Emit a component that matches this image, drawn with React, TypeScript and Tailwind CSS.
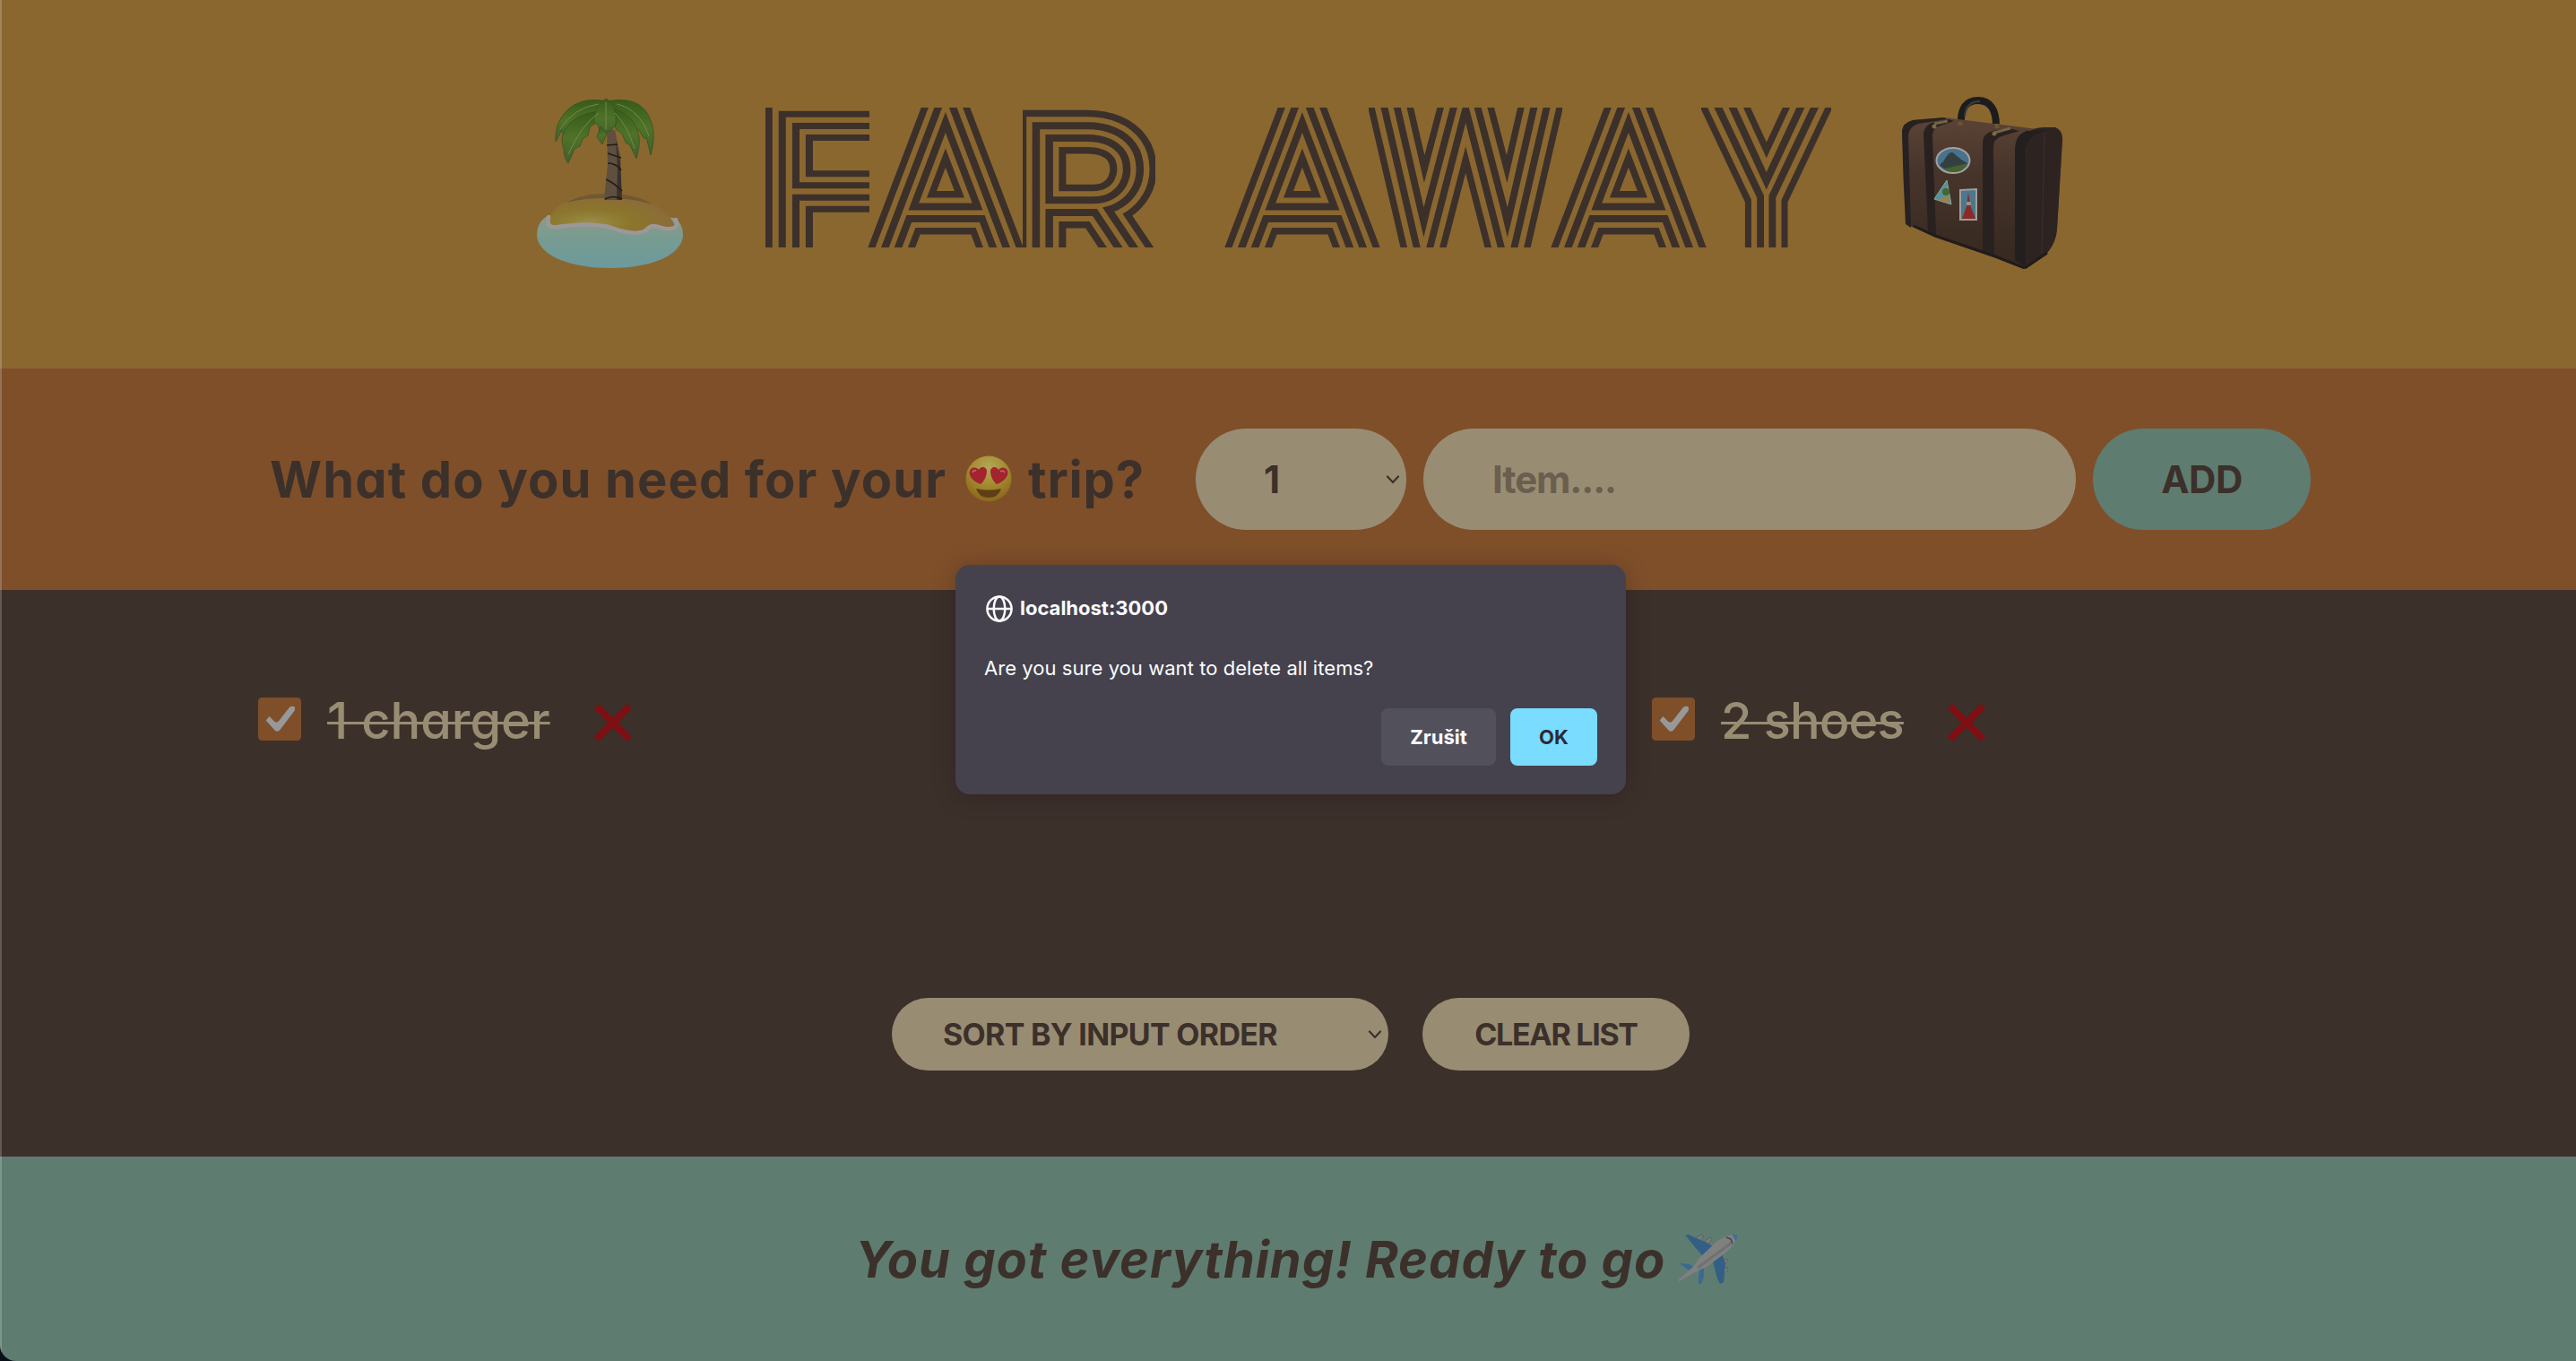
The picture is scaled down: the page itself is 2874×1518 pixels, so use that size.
import React from "react";

const QUICK = "font-['Inter','Liberation_Sans',sans-serif] [font-feature-settings:'cv11']";

type LetterProps = { char: string; box: string; glyph: string };

/* One inline-striped capital: the outer, middle and inner contours are stacked strokes of the same glyph. */
function Letter({ char, box, glyph }: LetterProps) {
  return (
    <span className={`relative block h-[156px] shrink-0 overflow-hidden ${box}`}>
      <span
        data-char={char}
        className={`absolute isolate block leading-none font-thin text-[#8a672f] [paint-order:stroke_fill] before:absolute before:inset-0 before:z-[-2] before:text-[#3c302b] before:content-[attr(data-char)] after:absolute after:inset-0 after:z-[-1] after:content-[attr(data-char)] ${glyph}`}
      >
        {char}
      </span>
    </span>
  );
}

const STROKES_F =
  "[-webkit-text-stroke:14px_#3c302b] before:[-webkit-text-stroke:40px_#3c302b] after:[-webkit-text-stroke:26px_#8a672f]";
const STROKES =
  "[-webkit-text-stroke:16px_#3c302b] before:[-webkit-text-stroke:43px_#3c302b] after:[-webkit-text-stroke:28px_#8a672f]";
const STROKES_W =
  "[-webkit-text-stroke:18px_#3c302b] before:[-webkit-text-stroke:50px_#3c302b] after:[-webkit-text-stroke:33px_#8a672f]";
const STROKES_Y =
  "[-webkit-text-stroke:20px_#3c302b] before:[-webkit-text-stroke:54px_#3c302b] after:[-webkit-text-stroke:36px_#8a672f]";

const A_GLYPH = "left-1/2 top-[-33px] -translate-x-1/2 scale-x-[1.02] font-['Inter',sans-serif] text-[247px]";

function Wordmark() {
  return (
    <h1 className="ml-[90px] mt-[10px] flex font-['Roboto',sans-serif]">
      <Letter char="F" box="w-[116px]" glyph={`left-[-4px] top-[-20px] origin-left scale-x-[1.15] text-[238px] ${STROKES_F}`} />
      <Letter char="A" box="-ml-[3px] w-[175px]" glyph={`${A_GLYPH} ${STROKES}`} />
      <Letter char="R" box="-ml-[1px] w-[148px]" glyph={`left-[-3px] top-[-4px] origin-left scale-x-[1.07] text-[218px] ${STROKES}`} />
      <Letter char="A" box="ml-[77px] w-[174px]" glyph={`${A_GLYPH} ${STROKES}`} />
      <Letter char="W" box="-ml-[13px] w-[216px]" glyph={`left-1/2 top-[-57px] -translate-x-1/2 scale-x-[0.86] text-[253px] ${STROKES_W}`} />
      <Letter char="A" box="-ml-[13px] w-[174px]" glyph={`${A_GLYPH} ${STROKES}`} />
      <Letter char="Y" box="-ml-[6px] w-[145px]" glyph={`left-1/2 top-[-55px] -translate-x-1/2 scale-x-[0.78] text-[267px] ${STROKES_Y}`} />
    </h1>
  );
}

function Island() {
  return (
    <svg viewBox="0 0 166 190" className="h-[190px] w-[166px] shrink-0">
      <defs>
        <linearGradient id="sea" x1="0" y1="0" x2="0" y2="1">
          <stop offset="0" stopColor="#8f9a85" />
          <stop offset=".45" stopColor="#779b91" />
          <stop offset="1" stopColor="#6c9a9c" />
        </linearGradient>
        <radialGradient id="sand" cx=".32" cy=".75" r=".75">
          <stop offset="0" stopColor="#998c4a" />
          <stop offset=".45" stopColor="#8b762b" />
          <stop offset="1" stopColor="#8b693b" />
        </radialGradient>
        <linearGradient id="leaf" x1="0" y1="0" x2="0" y2="1">
          <stop offset="0" stopColor="#365c1b" />
          <stop offset=".5" stopColor="#4f7228" />
          <stop offset="1" stopColor="#43602f" />
        </linearGradient>
      </defs>
      <path d="M16 130C5 133 1 143 1 153c2 23 39 36 82 36s79-13 81-36c0-12-5-17-10-20Z" fill="url(#sea)" />
      <path d="M16 130c10-16 34-24 63-24 40 1 68 16 77 37-7 6-18-2-25 0-8 2-4 6-15 6-14 0-38-9-55-9-16-1-28 3-42 1-4-2-5-6-3-11Z" fill="url(#sand)" />
      <path d="M14 132c-2 10 1 12 10 11 20-3 40-4 57 0 12 4 26 9 37 6 8-2 6-7 13-7 8 1 16 6 23 2 4-2 3-5 2-9" fill="none" stroke="#9b9899" strokeWidth="4.500" strokeLinecap="round" />
      <path d="M34 116c12-7 26-10 46-10s38 4 50 12c-18-5-30-7-50-7s-30 1-46 5Z" fill="#5a4a2c" opacity=".55" />
      <path d="M79 35h9l6 28 2 50H76l4-40Z" fill="#5e4f3f" />
      <path d="M89 46l5 24 2 43h-6l1-36Z" fill="#3b302a" />
      <path d="M79 52l12-1M80 61l15 5M80 72q10 0 15 8M78 90q9 4 18 13M77 112q9-5 19 0" fill="none" stroke="#211c19" strokeWidth="1.6" />
      <g fill="url(#leaf)" stroke="#31501f" strokeWidth=".7">
        <path d="M78 3C55-2 38 6 29 20c-7 10-7 19-7 28l7-13 2 8 9-15 4 5 10-12 4 3 26-13Z" />
        <path d="M80 3c24-5 40 3 46 17 7 13 6 28 2 43l-5-20-2 2-7-11-4 1-8-12-5-2-18-10Z" />
        <path d="M72 14C53 16 37 23 31 38c-4 8-1 14 0 18 0 7 2 12 5 16l7-16 6-3 3-8 6-4 2-9 5-4 8-10Z" />
        <path d="M86 11c15 5 25 14 28 27 3 11 0 21-2 29l-7-15-5-3-4-10-6-4-6-14Z" />
        <path d="M78 0C69 6 64 16 65 27l4 2 4 14 6-6 6-3 4-5c1-14-2-24-11-29Z" />
        <path d="M72 31l-4 12 6 8 5-12Z" />
      </g>
      <path d="M78 4v30M70 16Q50 30 36 62M88 16q14 14 22 40M70 6Q42 10 27 34M90 6q26 6 36 36" fill="none" stroke="#718b48" strokeWidth="1" />
    </svg>
  );
}

function Suitcase() {
  return (
    <svg viewBox="0 0 182 192" className="h-[192px] w-[182px] shrink-0">
      <defs>
        <linearGradient id="hide" x1="0" y1="0" x2="0" y2="1">
          <stop offset="0" stopColor="#5b4336" />
          <stop offset=".35" stopColor="#47352b" />
          <stop offset="1" stopColor="#35281f" />
        </linearGradient>
      </defs>
      <path d="M67 31C66 12 73 4 86 4s20 10 20 28" fill="none" stroke="#1d1c1d" strokeWidth="8" />
      <path d="M71 22C72 9 79 5 88 5" fill="none" stroke="#3c3b3b" strokeWidth="2" />
      <path d="M1 38q1-9 12-12l35-3 96 12 32 4q5 2 4 10l-6 98q-1 16-11 27l-25 17-33-13-67-23-28-11q-4-10-5-22Z" fill="url(#hide)" />
      <path d="M140 42q6-8 20-8h12q8 3 8 13l-6 100q-1 15-11 27l-24 17q-4-30-2-60Z" fill="#2d2422" />
      <path d="M160 40l-3 134" stroke="#3d302b" strokeWidth="1" />
      <path d="M1 38q1-9 12-12l35-3 3 2-32 5q-9 3-11 12l3 104-6-4Q2 90 1 38Z" fill="#272122" />
      <path d="M25 40q2-8 9-11l19-4 6 2-18 6q-6 3-6 11l4 110-9-4Z" fill="#29211f" />
      <path d="M91 50q1-9 11-12l18-3 12 3-20 6q-9 3-9 12l1 122-13-5Z" fill="#29211f" />
      <path d="M127 60q0-18 13-22l24-1-14 5q-10 5-11 19v129l-12-8Z" fill="#241f1f" />
      <path d="M37 30l15-3M104 40l18-5" stroke="#726345" strokeWidth="3" />
      <circle cx="37" cy="33" r="2.500" fill="#7a6a43" />
      <circle cx="104" cy="41" r="2.500" fill="#7a6a43" />
      <path d="M66 28v4M107 30v5" stroke="#695733" strokeWidth="5" />
      <path d="M138 191l25-17M14 144l24 11 67 23 33 13" fill="none" stroke="#211b1a" strokeWidth="3" />
      <ellipse cx="58" cy="71" rx="18.500" ry="14" fill="#49728f" stroke="#a1a19d" strokeWidth="2" />
      <path d="M43 76q5-4 8-10 5-7 9-2 6 6 14 10-4 9-16 9-10-1-15-7Z" fill="#33403f" />
      <path d="M48 80q10-2 26-6-3 10-16 10-6 0-10-4Z" fill="#48602f" />
      <path d="M51 93l5 27-19-6Z" fill="#57919d" stroke="#90a19b" />
      <circle cx="50" cy="106" r="4" fill="#3f692d" />
      <path d="M42 115l10-5 3 8Z" fill="#a18144" />
      <path d="M66 104l18-1v34H66Z" fill="#4b788c" stroke="#9f9d98" strokeWidth="2" />
      <path d="M75 107l3 16 5 13H68l5-14Z" fill="#8a2a28" />
      <path d="M73 117h5v4h-5Z" fill="#98918c" />
    </svg>
  );
}

function HeartEyes() {
  return (
    <svg viewBox="0 0 52 52" className="-mt-[2px] h-[52px] w-[52px] shrink-0">
      <defs>
        <radialGradient id="face" cx=".5" cy=".25" r=".75">
          <stop offset="0" stopColor="#b3a65a" />
          <stop offset=".5" stopColor="#a48d30" />
          <stop offset="1" stopColor="#8b651d" />
        </radialGradient>
      </defs>
      <circle cx="26" cy="26" r="25.5" fill="url(#face)" />
      <path d="M17 32C8 29 3 22 5 17c2-5 8-4 10-1 2-4 8-4 9 1 0 6-3 12-7 15Z" fill="#a3242e" />
      <path d="M35 32c9-3 14-10 12-15-2-5-8-4-10-1-2-4-8-4-9 1 0 6 3 12 7 15Z" fill="#a3242e" />
      <path d="M8 19q1-3 4-2M39 18q3-2 5 1" stroke="#bb6b70" strokeWidth="1.6" fill="none" />
      <path d="M12 37q14 3 28 0-3 10-14 10T12 37Z" fill="#5d3f17" />
    </svg>
  );
}

function Plane() {
  return (
    <svg viewBox="0 0 66 56" className="h-[56px] w-[66px] shrink-0">
      <g fill="#777b7b" stroke="#4d5556" strokeWidth=".6">
        <path d="M20 5l6-4 3 2-5 6ZM30 8l6-4 2 2-4 6ZM49 32l6-4 1 3-5 5ZM49 41l6-4 1 4-6 4Z" />
      </g>
      <path d="M11 5l-3-3 4-1 20 9 13 8-13 12-13-15Z" fill="#335f86" />
      <path d="M39 31l10-9 4 11-2 21-4 2-3-6Z" fill="#335f86" />
      <path d="M1 33l12 1 7 4-5 5-8-6Z" fill="#3a6a91" />
      <path d="M24 40l5-2v10l-3 8h-3v-9Z" fill="#3a6a91" />
      <path d="M64 1q3 3-1 9-3 6-12 13L32 37l-9 4L1 53l-1-1 17-15 7-10L43 9Q56 0 64 1Z" fill="#808080" />
      <path d="M60 1q5-1 6 1 1 3-2 6-1-4-4-7Z" fill="#3a709b" />
      <path d="M22 38 60 10" stroke="#666868" strokeWidth="3" opacity=".6" />
      <path d="M54 4l5 2 2 5" fill="none" stroke="#3e4347" strokeWidth="1.4" />
    </svg>
  );
}

function Chevron() {
  return (
    <svg viewBox="0 0 16 10" className="h-[10px] w-[16px]" fill="none" stroke="#3c302b" strokeWidth="2.200" strokeLinecap="round">
      <path d="M2 1.500 8 8l6-6.500" />
    </svg>
  );
}

function Item({ label, className }: { label: string; className: string }) {
  return (
    <li className="flex items-start">
      <svg viewBox="0 0 48 48" className="mt-[1px] h-12 w-12">
        <rect width="48" height="48" rx="4.500" fill="#7f4f2a" />
        <path d="M8.700 25.500 12.500 21l6 6q2.500 1.500 4.500-.7L35 10.800q2-1.300 5.500-.8 1 2.500.3 4.500L24 36.500q-3 2.500-5.500 0z" fill="#989899" />
      </svg>
      <span className={`ml-[29px] mt-[2px] block whitespace-nowrap text-[56px] font-medium leading-[50px] text-[#988d73] line-through decoration-[3px] ${className}`}>
        {label}
      </span>
      <svg viewBox="0 0 44 44" className="ml-[48px] mt-[7px] h-[44px] w-[44px]">
        <path d="M1 6.500 6.500 1 22 16.500 37.500 1 43 6.500 28 22l15 15.500-5.500 5.500L22 27.500 6.500 43 1 37.500 16 22Z" fill="#7e0f13" />
      </svg>
    </li>
  );
}

function Dialog() {
  return (
    <div
      role="dialog"
      className="absolute left-[1066px] top-[630px] flex h-[256px] w-[748px] flex-col rounded-2xl bg-[#45424d] px-8 pb-8 pt-[30px] font-['Inter',sans-serif] text-[22px] text-[#fbfbfe] shadow-[0_2px_28px_rgba(0,0,0,0.22)] [font-feature-settings:normal]"
    >
      <div className="flex h-9 items-center gap-2 pl-[2px]">
        <svg viewBox="0 0 30 30" className="mt-[2px] h-[30px] w-[30px]" fill="none" stroke="#fbfbfe" strokeWidth="2.500">
          <circle cx="15" cy="15" r="13.600" />
          <ellipse cx="15" cy="15" rx="6.300" ry="13.600" />
          <path d="M1.500 15h27" />
        </svg>
        <span className="font-bold leading-9">localhost:3000</span>
      </div>
      <p className="mt-[33px] leading-8 tracking-[0.050px]">Are you sure you want to delete all items?</p>
      <div className="mt-auto flex justify-end gap-4 font-bold">
        <button className="h-16 w-[128px] rounded-lg bg-[#52505b]">Zrušit</button>
        <button className="h-16 w-[97px] rounded-lg bg-[#7adcff] text-[#2b2a33]">OK</button>
      </div>
    </div>
  );
}

export default function App() {
  return (
    <div className="h-[1518px] w-[2874px] overflow-hidden bg-[#0a1018]">
      <div className={`relative flex h-full flex-col overflow-hidden rounded-bl-[18px] text-[#3c302b] ${QUICK}`}>
        <header className="flex h-[411px] shrink-0 items-start bg-[#8a672f] pl-[598px] pt-[110px]">
          <Island />
          <Wordmark />
          <div className="-mt-[2px] ml-[78px]">
            <Suitcase />
          </div>
        </header>

        <form className="flex h-[247px] shrink-0 items-center bg-[#7f4f2a] pl-[301px]">
          <h3 className="flex w-[1033px] items-center whitespace-nowrap text-[56px] font-bold">
            <span className="w-[776px] tracking-[1.150px]">What do you need for your</span>
            <HeartEyes />
            <span className="ml-[18px] tracking-[0.900px]">trip?</span>
          </h3>
          <div className="flex h-[113px] w-[235px] items-center justify-between rounded-full bg-[#988d73] pl-[76px] pr-[7px] text-[42px] font-bold">
            <span>1</span>
            <Chevron />
          </div>
          <div className="ml-[19px] flex h-[113px] w-[728px] items-center rounded-full bg-[#988d73] pl-[77px] text-[42px] font-bold tracking-[-1.100px] text-[#6a5e4f]">
            Item....
          </div>
          <div className="ml-[19px] flex h-[113px] w-[243px] items-center justify-center rounded-full bg-[#5f7c70] text-[42px] font-bold tracking-[-0.500px]">
            ADD
          </div>
        </form>

        <main className="flex h-[632px] shrink-0 flex-col bg-[#3c302b]">
          <ul className="grid grid-cols-[1555px_auto] pl-[288px] pt-[119px]">
            <Item label="1 charger" className="w-[249px]" />
            <Item label="2 shoes" className="w-[204px] tracking-[-0.900px]" />
          </ul>
          <div className="mb-[96px] ml-[995px] mt-auto flex gap-[38px] text-[34px] font-bold">
            <div className="flex h-[81px] w-[554px] items-center justify-between rounded-full bg-[#988d73] pl-[57px] pr-[7px] tracking-[-0.700px]">
              <span>SORT BY INPUT ORDER</span>
              <Chevron />
            </div>
            <div className="flex h-[81px] w-[298px] items-center justify-center rounded-full bg-[#988d73] tracking-[-1.300px]">CLEAR LIST</div>
          </div>
        </main>

        <footer className="flex grow items-start bg-[#5f7c70] pl-[954px] pt-[81px] text-[56px] font-bold italic">
          <span className="w-[918px] whitespace-nowrap leading-[68px] tracking-[0.950px]">You got everything! Ready to go</span>
          <span className="mt-[5px]">
            <Plane />
          </span>
        </footer>

        <Dialog />
        <div className="absolute inset-y-0 left-0 w-[2px] bg-white/20" />
      </div>
    </div>
  );
}
